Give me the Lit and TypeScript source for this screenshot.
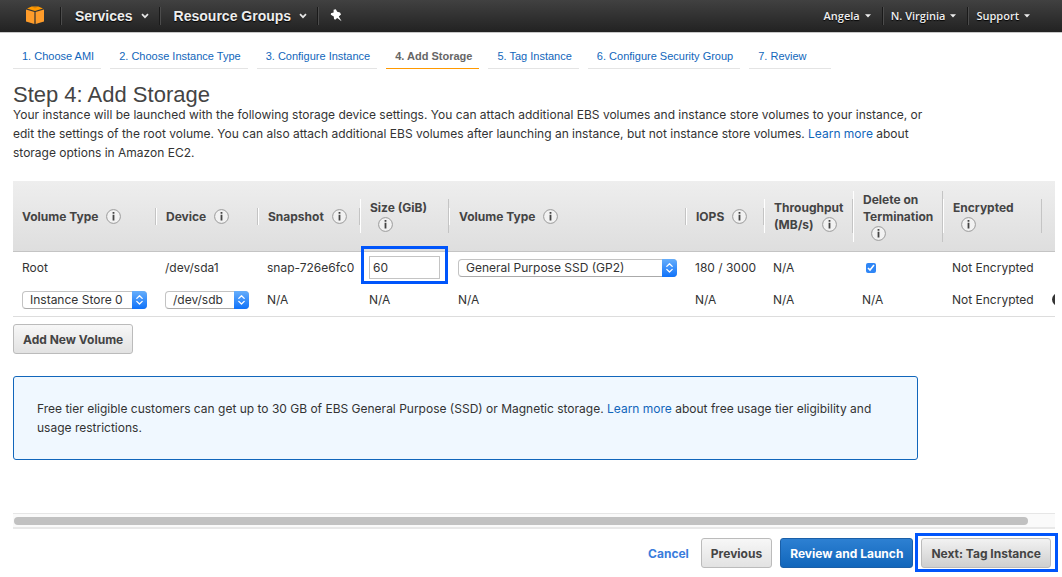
import { LitElement, html, css, nothing } from "lit";
import { customElement, property, state } from "lit/decorators.js";
import { classMap } from "lit/directives/class-map.js";

const STEPS = [
  "1. Choose AMI",
  "2. Choose Instance Type",
  "3. Configure Instance",
  "4. Add Storage",
  "5. Tag Instance",
  "6. Configure Security Group",
  "7. Review",
];

const COLUMNS = [
  { key: "type", label: "Volume Type" },
  { key: "device", label: "Device" },
  { key: "snapshot", label: "Snapshot" },
  { key: "size", label: "Size (GiB)" },
  { key: "kind", label: "Volume Type" },
  { key: "iops", label: "IOPS" },
  { key: "rate", label: "Throughput (MB/s)" },
  { key: "delete", label: "Delete on Termination" },
  { key: "encrypted", label: "Encrypted" },
];

const chevron = html`<svg class="chevron" width="8" height="6" viewBox="0 0 8 6" aria-hidden="true">
  <path d="M1 1.2 L4 4.2 L7 1.2" fill="none" stroke="#e6e6e6" stroke-width="1.7" />
</svg>`;

const caret = html`<svg class="caret" width="6" height="4" viewBox="0 0 6 4" aria-hidden="true">
  <path d="M0 0.2 H6 L3 3.6 Z" fill="#eee" />
</svg>`;

@customElement("info-button")
export class InfoButton extends LitElement {
  @property() label = "";

  static styles = css`
    :host {
      display: inline-block;
      width: 15px;
      height: 15px;
      vertical-align: -3px;
      margin-left: 8px;
    }
    .info {
      display: block;
      padding: 0;
      border: 0;
      background: none;
      cursor: pointer;
    }
    svg {
      display: block;
    }
  `;

  render() {
    return html`<button class="info" type="button" aria-label="About ${this.label}">
      <svg width="15" height="15" viewBox="0 0 15 15" aria-hidden="true">
        <circle cx="7.5" cy="7.5" r="6.9" fill="#f2f2f2" stroke="#999" stroke-width="1" />
        <path d="M6.6 3 H8.4 V4.8 H6.6 Z M6.6 5.8 H8.4 V11.6 H6.6 Z" fill="#444" />
      </svg>
    </button>`;
  }
}

@customElement("drop-down")
export class DropDown extends LitElement {
  @property() label = "";
  @property({ attribute: false }) options: string[] = [];

  static styles = css`
    :host {
      display: block;
    }
    .field {
      position: relative;
      display: flex;
    }
    select {
      appearance: none;
      box-sizing: border-box;
      width: 100%;
      height: 18px;
      margin: 0;
      padding: 0 18px 0 7px;
      border: 1px solid #c3c3c3;
      border-bottom-color: #aaa;
      border-radius: 4px;
      background: #fff;
      color: #333;
      font: 12px/16px Inter, "Liberation Sans", sans-serif;
    }
    .knob {
      position: absolute;
      top: 0;
      right: 0;
      width: 15px;
      height: 18px;
      border-radius: 0 4px 4px 0;
      background: linear-gradient(#66aefb, #0f72fa);
      pointer-events: none;
    }
    svg {
      display: block;
    }
  `;

  render() {
    return html`<div class="field">
      <select aria-label=${this.label}>
        ${this.options.map((o) => html`<option>${o}</option>`)}
      </select>
      <span class="knob">
        <svg width="15" height="18" viewBox="0 0 15 18" aria-hidden="true">
          <path
            d="M4.8 7.4 L7.5 4.8 L10.2 7.4 M4.8 10.4 L7.5 13 L10.2 10.4"
            fill="none"
            stroke="#fff"
            stroke-width="1.3"
            stroke-linecap="round"
            stroke-linejoin="round"
          />
        </svg>
      </span>
    </div>`;
  }
}

@customElement("console-bar")
export class ConsoleBar extends LitElement {
  static styles = css`
    :host {
      display: block;
    }
    .bar {
      display: flex;
      align-items: center;
      height: 32px;
      padding: 0 21px 0 25px;
      background: linear-gradient(#414141, #222);
      border-bottom: 1px solid #c8c8c8;
    }
    .logo {
      display: block;
      margin-right: 15px;
    }
    .logo svg {
      display: block;
    }
    button {
      display: flex;
      align-items: center;
      height: 18px;
      margin: 0;
      border: 0;
      border-left: 1px solid #1a1a1a;
      box-shadow: inset 1px 0 #4c4c4c;
      background: none;
      color: #eee;
      text-shadow: 0 1px 1px #000;
      cursor: pointer;
    }
    .menu {
      gap: 8px;
      padding: 0 10px 0 14px;
      font: bold 14px/18px "Liberation Sans", Arial, sans-serif;
    }
    .pin {
      padding: 0 12px;
    }
    .right {
      display: flex;
      margin-left: auto;
    }
    .small {
      gap: 5px;
      padding: 0 11px 0 8px;
      font: 600 11px/18px "Open Sans", sans-serif;
    }
    .small:first-child {
      border-left: 0;
      box-shadow: none;
    }
  `;

  render() {
    return html`<nav class="bar" aria-label="Console">
      <a class="logo" href="#" aria-label="Console home">
        <svg width="20" height="20" viewBox="0 0 20 20" aria-hidden="true">
          <path d="M6.6 0.4 H13.4 L18 2.4 L10 5 L2 2.4 Z" fill="#f90" />
          <path d="M7.6 1.4 H12.4 L10 2.2 Z" fill="#c46f10" />
          <path d="M1 3.4 L9.4 6 V18 L1 15.6 Z" fill="#ff9c2a" />
          <path d="M19 3.4 L10.6 6 V18 L19 15.6 Z" fill="#ff9c2a" />
        </svg>
      </a>
      <button class="menu" type="button">Services ${chevron}</button>
      <button class="menu" type="button">Resource Groups ${chevron}</button>
      <button class="pin" type="button" aria-label="Edit shortcuts">
        <svg width="12" height="14" viewBox="0 0 12 14" aria-hidden="true">
          <path
            d="M3.6 0.8 L5.8 0.2 L7.2 2.8 L10 3.6 L11 5.4 L8.8 7.4 L11.6 12.2 L7.2 9 L5.2 10.8 L4 10 L3.8 7.6 L0.8 5.8 L1 4.2 L3.6 3.4 Z"
            fill="#fff"
          />
        </svg>
      </button>
      <div class="right">
        ${["Angela", "N. Virginia", "Support"].map(
          (t) => html`<button class="small" type="button">${t} ${caret}</button>`
        )}
      </div>
    </nav>`;
  }
}

@customElement("volume-table")
export class VolumeTable extends LitElement {
  @state() private size = "60";

  static styles = css`
    :host {
      display: block;
      overflow: hidden;
      color: #333;
      font: 12px/17px Inter, "Liberation Sans", sans-serif;
    }
    table {
      width: calc(100% + 20px);
      table-layout: fixed;
      border-collapse: separate;
      border-spacing: 0;
    }
    .c-type { width: 143px; }
    .c-device { width: 102px; }
    .c-snapshot { width: 102px; }
    .c-size { width: 89px; }
    .c-kind { width: 237px; }
    .c-iops { width: 78px; }
    .c-rate { width: 89px; }
    .c-delete { width: 90px; }
    .c-encrypted { width: 99px; }
    th {
      height: 70px;
      padding: 0;
      border-bottom: 1px solid #c4c4c4;
      background: linear-gradient(#eee, #dedede);
      text-align: left;
      vertical-align: middle;
      color: #444;
      font-weight: 700;
    }
    .head {
      padding: 0 8px 0 9px;
      border-left: 1px solid #fff;
      border-right: 1px solid #c4c4c4;
    }
    .head.first {
      border-left: 0;
    }
    td {
      height: 31px;
      padding: 0 9px;
      white-space: nowrap;
    }
    tr:last-child td {
      height: 33px;
      border-bottom: 1px solid #ddd;
    }
    .mark {
      position: relative;
      display: block;
      width: 71px;
    }
    .mark::after {
      content: "";
      position: absolute;
      inset: -10px -8px -5px -8px;
      border: 3px solid #0055fb;
      pointer-events: none;
    }
    .size {
      box-sizing: border-box;
      display: block;
      width: 100%;
      height: 23px;
      margin: 0;
      padding: 0 3px;
      border: 1px solid #c4c4c4;
      color: #333;
      font: 12px/17px Inter, "Liberation Sans", sans-serif;
    }
    .check {
      display: block;
      width: 10px;
      height: 10px;
      margin: 0 4px;
      accent-color: #2f86f6;
    }
    .kind {
      width: 219px;
    }
    .type {
      width: 125px;
    }
    .device {
      width: 84px;
    }
    .remove {
      display: block;
      padding: 0 1px;
      border: 0;
      background: none;
    }
    .remove svg {
      display: block;
    }
  `;

  render() {
    return html`<table>
      <colgroup>
        ${COLUMNS.map((c) => html`<col class="c-${c.key}" />`)}
        <col />
      </colgroup>
      <thead>
        <tr>
          ${COLUMNS.map(
            (c, i) => html`<th scope="col">
              <div class=${classMap({ head: true, first: i === 0 })}>
                ${c.label}<info-button label=${c.label}></info-button>
              </div>
            </th>`
          )}
          <th></th>
        </tr>
      </thead>
      <tbody>
        <tr>
          <td>Root</td>
          <td>/dev/sda1</td>
          <td>snap-726e6fc0</td>
          <td>
            <span class="mark">
              <input
                class="size"
                type="text"
                aria-label="Size (GiB)"
                .value=${this.size}
                @input=${(e: Event) => (this.size = (e.target as HTMLInputElement).value)}
              />
            </span>
          </td>
          <td>
            <drop-down class="kind" label="Volume type" .options=${["General Purpose SSD (GP2)"]}></drop-down>
          </td>
          <td>180 / 3000</td>
          <td>N/A</td>
          <td><input class="check" type="checkbox" aria-label="Delete on termination" checked /></td>
          <td>Not Encrypted</td>
          <td></td>
        </tr>
        <tr>
          <td>
            <drop-down class="type" label="Volume" .options=${["Instance Store 0"]}></drop-down>
          </td>
          <td>
            <drop-down class="device" label="Device" .options=${["/dev/sdb"]}></drop-down>
          </td>
          <td>N/A</td>
          <td>N/A</td>
          <td>N/A</td>
          <td>N/A</td>
          <td>N/A</td>
          <td>N/A</td>
          <td>Not Encrypted</td>
          <td>
            <button class="remove" type="button" aria-label="Remove volume">
              <svg width="13" height="13" viewBox="0 0 13 13" aria-hidden="true">
                <circle cx="6.5" cy="6.5" r="6.5" fill="#333" />
                <path d="M4 4 L9 9 M9 4 L4 9" stroke="#fff" stroke-width="1.6" />
              </svg>
            </button>
          </td>
        </tr>
      </tbody>
    </table>`;
  }
}

@customElement("app-root")
export class AppRoot extends LitElement {
  @state() private current = 3;

  static styles = css`
    :host {
      display: flex;
      flex-direction: column;
      min-height: 100vh;
      background: #fff;
      color: #333;
      font: 12px/19px Inter, "Liberation Sans", sans-serif;
    }
    a {
      color: #1166bb;
      text-decoration: none;
    }
    main {
      flex: 1;
      padding: 14px 7px 0 13px;
    }
    .steps {
      display: flex;
      gap: 9px;
      margin: 0 0 15px;
      padding: 0;
      list-style: none;
      font: 11px/18px "Liberation Sans", Arial, sans-serif;
    }
    .step {
      padding: 0 7px 3px 9px;
      border-bottom: 1px solid #e4e4e4;
      white-space: nowrap;
    }
    .step:last-child {
      padding-right: 24px;
    }
    .step.current {
      border-bottom-color: #f90;
      font-weight: bold;
    }
    .step.current a {
      color: #666;
    }
    h1 {
      margin: 0;
      color: #444;
      font: 22px/21px "Liberation Sans", Arial, sans-serif;
    }
    .intro {
      margin: 0 0 19px;
    }
    .btn {
      height: 30px;
      margin: 0;
      padding: 0 9px;
      border: 1px solid #bbb;
      border-radius: 3px;
      background: linear-gradient(#f7f7f7, #e2e2e2);
      color: #444;
      font: 700 12px/17px Inter, "Liberation Sans", sans-serif;
      white-space: nowrap;
      cursor: pointer;
    }
    .btn.primary {
      border-color: #1a5fa8;
      background: linear-gradient(#2d80d2, #1166bb);
      color: #fff;
    }
    .btn.next {
      background: linear-gradient(#f2f2f2, #cfcfcf);
    }
    .add {
      margin-top: 7px;
    }
    .notice {
      box-sizing: border-box;
      max-width: 905px;
      margin-top: 22px;
      padding: 22px 23px;
      border: 1px solid #1166bb;
      border-radius: 3px;
      background: #f0f8ff;
    }
    .notice p {
      margin: 0;
    }
    .scroll {
      margin: 0 7px 9px 13px;
      padding: 3px 27px 2px 1px;
      border-top: 1px solid #e6e6e6;
      border-bottom: 2px solid #e8e8e8;
      background: #fafafa;
    }
    .thumb {
      height: 8px;
      border-radius: 4px;
      background: #c1c1c1;
    }
    .actions {
      display: flex;
      justify-content: flex-end;
      align-items: center;
      gap: 8px;
      padding: 0 11px 9px;
    }
    .cancel {
      margin-right: 4px;
      color: #3a7ddc;
      font-weight: 700;
    }
    .mark {
      position: relative;
      display: flex;
    }
    .mark::after {
      content: "";
      position: absolute;
      inset: -5px -7px -4px -6px;
      border: 3px solid #0055fb;
      pointer-events: none;
    }
  `;

  render() {
    return html`
      <console-bar></console-bar>
      <main>
        <ol class="steps">
          ${STEPS.map(
            (s, i) => html`<li class=${classMap({ step: true, current: i === this.current })}>
              <a href="#" aria-current=${i === this.current ? "step" : nothing}>${s}</a>
            </li>`
          )}
        </ol>
        <h1>Step 4: Add Storage</h1>
        <p class="intro">
          Your instance will be launched with the following storage device settings. You can attach
          additional EBS volumes and instance store volumes to your instance, or<br />
          edit the settings of the root volume. You can also attach additional EBS volumes after
          launching an instance, but not instance store volumes. <a href="#">Learn more</a> about<br />
          storage options in Amazon EC2.
        </p>
        <volume-table></volume-table>
        <button class="btn add" type="button">Add New Volume</button>
        <section class="notice">
          <p>
            Free tier eligible customers can get up to 30 GB of EBS General Purpose (SSD) or Magnetic
            storage. <a href="#">Learn more</a> about free usage tier eligibility and<br />
            usage restrictions.
          </p>
        </section>
      </main>
      <div class="scroll"><div class="thumb"></div></div>
      <footer class="actions">
        <a class="cancel" href="#">Cancel</a>
        <button class="btn" type="button">Previous</button>
        <button class="btn primary" type="button">Review and Launch</button>
        <span class="mark"><button class="btn next" type="button">Next: Tag Instance</button></span>
      </footer>
    `;
  }
}
